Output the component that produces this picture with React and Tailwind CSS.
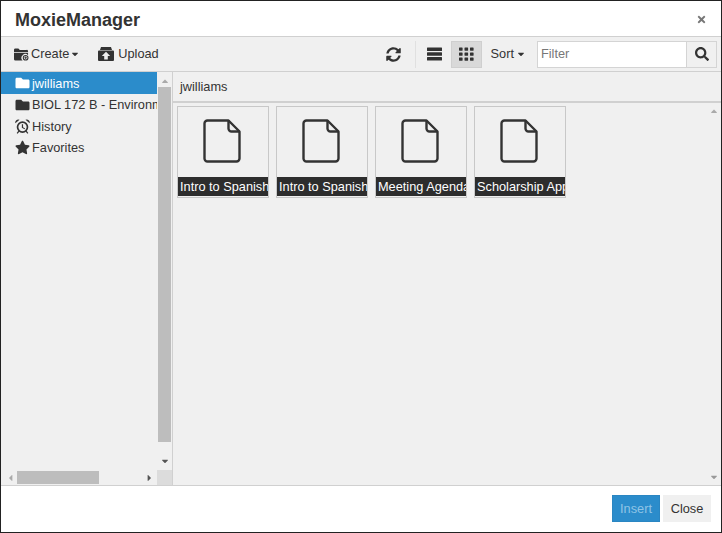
import React from 'react'
import { FaFolder, FaStar, FaSearch, FaTimes, FaSyncAlt, FaCaretDown, FaCaretUp, FaCaretLeft, FaCaretRight } from 'react-icons/fa'

const files = ['Intro to Spanish', 'Intro to Spanish', 'Meeting Agenda', 'Scholarship App']

function CreateIcon() {
  return (
    <svg viewBox="0 0 16 14" className="w-[15px] h-[14px]" fill="#333">
      <path d="M0 2.500A1.500 1.500 0 0 1 1.500 1h3.200l1.500 1.600h7.300A1.500 1.500 0 0 1 15 4v1H0z" />
      <path d="M0 6h15v2.200A4 4 0 0 0 9.200 14H1.500A1.500 1.500 0 0 1 0 12.500z" />
      <circle cx="12.400" cy="11" r="2.500" fill="none" stroke="#333" strokeWidth="1.100" />
      <path d="M12.400 9.600v2.800M11 11h2.800" stroke="#333" strokeWidth="0.900" />
    </svg>
  )
}

function UploadIcon() {
  return (
    <svg viewBox="0 0 16 14" className="w-[16px] h-[14px]" fill="#333">
      <path d="M3 0h10l1 3H2z" />
      <path fillRule="evenodd" d="M1 3.600h14a1 1 0 0 1 1 1V13a1 1 0 0 1-1 1H1a1 1 0 0 1-1-1V4.600a1 1 0 0 1 1-1zM8 4.800 3.800 9H6.200v3.400h3.600V9h2.400z" />
    </svg>
  )
}

function ListIcon() {
  return (
    <svg viewBox="0 0 15 14" className="w-[15px] h-[14px]" fill="#333">
      <rect x="0" y="0.500" width="15" height="3.500" rx="0.500" />
      <rect x="0" y="5.200" width="15" height="3.500" rx="0.500" />
      <rect x="0" y="9.900" width="15" height="3.500" rx="0.500" />
    </svg>
  )
}

function GridIcon() {
  return (
    <svg viewBox="0 0 15 14" className="w-[15px] h-[14px]" fill="#333">
      {[0.500, 5.500, 10.500].flatMap(y => [0, 5.500, 11].map(x => (
        <rect key={`${x}-${y}`} x={x} y={y} width="3.600" height="3.200" rx="0.400" />
      )))}
    </svg>
  )
}

function AlarmIcon() {
  return (
    <svg viewBox="0 0 16 16" className="w-[15px] h-[15px]" fill="#333">
      <path d="M0.400 4.600A3.200 3.200 0 0 1 4.800 0.800z" />
      <path d="M15.600 4.600A3.200 3.200 0 0 0 11.200 0.800z" />
      <circle cx="8" cy="8.600" r="5.300" fill="none" stroke="#333" strokeWidth="1.800" />
      <path d="M7.300 5.500h1.300v3.200l2.200 1.300-.6 1-2.900-1.700z" />
      <path d="M3.600 12.400l-1.800 2.400 1 .8 1.900-2.300zM12.400 12.400l1.800 2.400-1 .8-1.900-2.300z" />
    </svg>
  )
}

function FileIcon() {
  return (
    <svg viewBox="0 0 38 44" className="w-[38px] h-[44px] mr-[2px]" fill="none" stroke="#333" strokeWidth="2.400" strokeLinejoin="round">
      <path d="M4.500 1.500h21l11 11v27a3 3 0 0 1-3 3h-29a3 3 0 0 1-3-3v-35a3 3 0 0 1 3-3z" />
      <path d="M25.500 1.500v8a3 3 0 0 0 3 3h8" />
    </svg>
  )
}

function FileTile({ name }) {
  return (
    <div className="w-[92px] h-[92px] border border-[#c8c8c8] bg-[#f0f0f0] flex flex-col overflow-hidden">
      <div className="flex-1 flex items-center justify-center pb-[2px]">
        <FileIcon />
      </div>
      <div className="h-[19px] mb-[1px] bg-[#2d2d2d] text-white text-[12.750px] leading-[20px] pl-[2px] whitespace-nowrap overflow-hidden">
        {name}
      </div>
    </div>
  )
}

function TreeRow({ icon, label, active }) {
  return (
    <div className={`h-[21.500px] pt-[1px] flex items-center pl-[14px] gap-[3px] whitespace-nowrap text-[12.750px] ${active ? 'bg-[#2b8ccb] text-white' : 'text-[#333]'}`}>
      <span className="w-[15px] flex justify-center shrink-0">{icon}</span>
      <span className="-ml-[1px]">{label}</span>
    </div>
  )
}

export default function App() {
  return (
    <div className="w-[722px] h-[533px] bg-white border-[1px] border-[#222] flex flex-col overflow-hidden font-['Liberation_Sans',Arial,sans-serif] text-[#333]">
      {/* Header */}
      <div className="h-[35px] shrink-0 flex items-center justify-between pl-[14px] pr-[14px] border-b border-[#d0d0d0] box-content">
        <h1 className="text-[18px] font-bold text-[#333] leading-none mt-[2px]">MoxieManager</h1>
        <FaTimes className="text-[#777] w-[11px] h-[11px] mt-[2px]" />
      </div>

      {/* Toolbar */}
      <div className="h-[34px] shrink-0 bg-[#f0f0f0] border-b border-[#d0d0d0] flex items-center pl-[13px] pr-[4px] text-[12.750px] box-content">
        <div className="flex items-center gap-[1px]">
          <CreateIcon />
          <span className="ml-[1px]">Create</span>
          <FaCaretDown className="w-[10px] h-[10px]" />
        </div>
        <div className="flex items-center gap-[4px] ml-[18px]">
          <UploadIcon />
          <span>Upload</span>
        </div>
        <div className="flex-1" />
        <FaSyncAlt className="w-[15px] h-[15px]" />
        <div className="w-[1px] h-[27px] bg-[#e0e0e0] ml-[14px] mr-[11px]" />
        <ListIcon />
        <div className="w-[31px] h-[27px] bg-[#d9d9d9] border border-[#cfcfcf] flex items-center justify-center ml-[9px]">
          <GridIcon />
        </div>
        <div className="flex items-center gap-[2px] ml-[9px]">
          <span>Sort</span>
          <FaCaretDown className="w-[10px] h-[10px]" />
        </div>
        <div className="flex ml-[11px] h-[27px] border border-[#d4d4d4]">
          <div className="w-[148px] bg-white text-[#777] pl-[3px] leading-[24px]">Filter</div>
          <div className="w-[30px] bg-[#f0f0f0] border-l border-[#d4d4d4] flex items-center justify-center">
            <FaSearch className="w-[14px] h-[14px]" />
          </div>
        </div>
      </div>

      {/* Main */}
      <div className="flex-1 min-h-0 flex bg-[#f0f0f0]">
        <div className="w-[171px] shrink-0 border-r border-[#d0d0d0] box-content flex flex-col">
          <div className="flex-1 min-h-0 flex">
            <div className="flex-1 min-w-0 overflow-hidden">
              <TreeRow active icon={<FaFolder className="w-[15px] h-[14px] text-white" />} label="jwilliams" />
              <TreeRow icon={<FaFolder className="w-[15px] h-[14px] text-[#333]" />} label="BIOL 172 B - Environmental Science" />
              <TreeRow icon={<AlarmIcon />} label="History" />
              <TreeRow icon={<FaStar className="w-[15px] h-[15px] text-[#333]" />} label="Favorites" />
            </div>
            <div className="w-[15px] shrink-0 flex flex-col items-center">
              <FaCaretUp className="w-[10px] h-[10px] text-[#aaa] mt-[4px] mb-[1px]" />
              <div className="w-[13px] h-[355px] bg-[#bdbdbd]" />
              <div className="flex-1" />
              <FaCaretDown className="w-[10px] h-[10px] text-[#555] mb-[4px]" />
            </div>
          </div>
          <div className="h-[15px] shrink-0 flex items-center">
            <FaCaretLeft className="w-[9px] h-[10px] text-[#aaa] ml-[5px]" />
            <div className="w-[82px] h-[13px] bg-[#bdbdbd] ml-[2px]" />
            <div className="flex-1" />
            <FaCaretRight className="w-[9px] h-[10px] text-[#555] mr-[3px]" />
            <div className="w-[15px] h-[15px] bg-[#dcdcdc]" />
          </div>
        </div>

        <div className="flex-1 min-w-0 flex flex-col">
          <div className="h-[29px] shrink-0 border-b-[2px] border-[#d0d0d0] box-content flex items-center pl-[7px] text-[12.750px]">
            jwilliams
          </div>
          <div className="flex-1 min-h-0 flex">
            <div className="flex-1 flex items-start gap-[7px] pt-[3px] pl-[4px]">
              {files.map((f, i) => <FileTile key={i} name={f} />)}
            </div>
            <div className="w-[15px] shrink-0 flex flex-col items-center justify-between py-[3px]">
              <FaCaretUp className="w-[10px] h-[10px] text-[#aaa]" />
              <FaCaretDown className="w-[10px] h-[10px] text-[#999]" />
            </div>
          </div>
        </div>
      </div>

      {/* Footer */}
      <div className="h-[46px] shrink-0 border-t border-[#d0d0d0] box-content bg-white flex items-center justify-end gap-[3px] pr-[10px] text-[12.750px]">
        <button className="w-[48px] h-[27px] -mt-[1px] bg-[#2b8ccb] border border-[#2a86c2] text-[#8fc4e6]">Insert</button>
        <button className="w-[48px] h-[27px] -mt-[1px] bg-[#f0f0f0] text-[#333]">Close</button>
      </div>
    </div>
  )
}
